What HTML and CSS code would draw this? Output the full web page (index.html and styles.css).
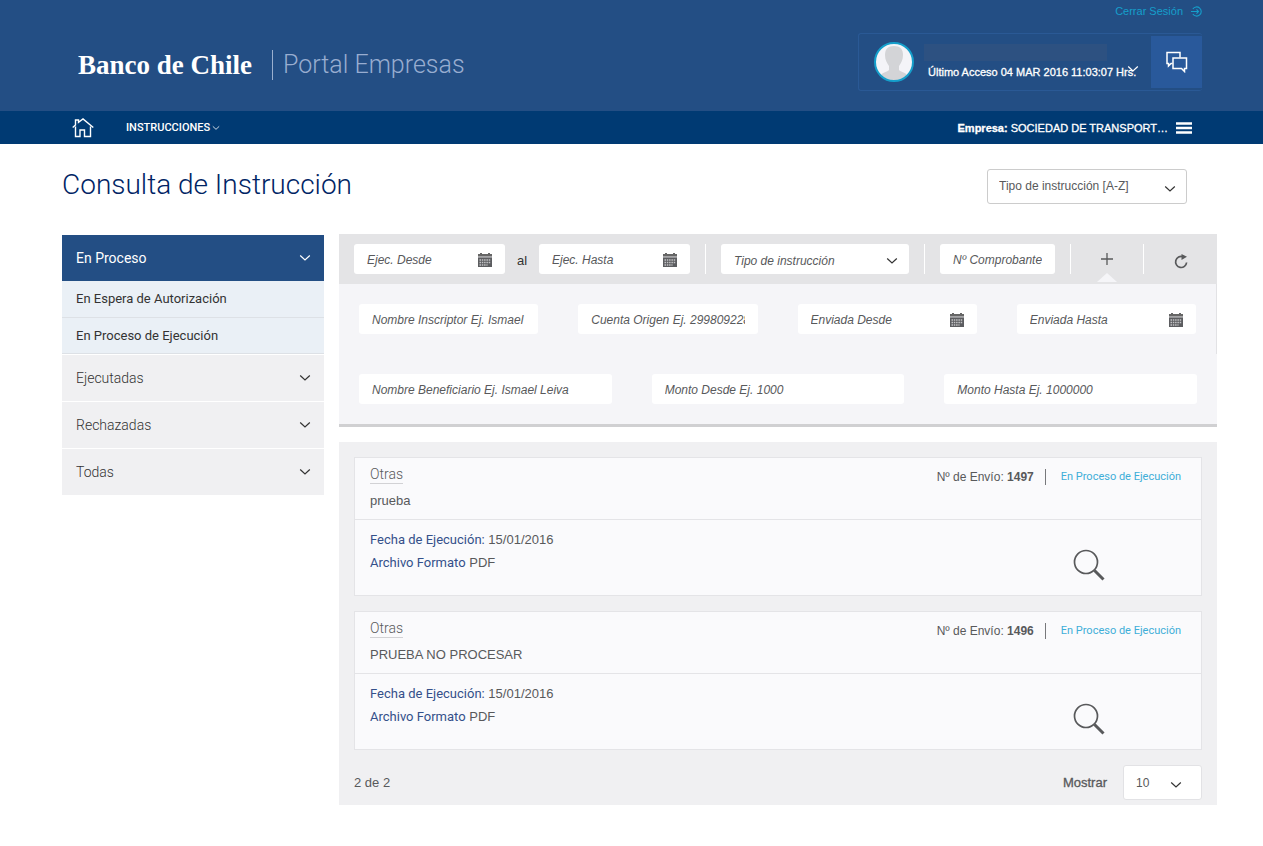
FILE: index.html
```html
<!DOCTYPE html>
<html lang="es">
<head>
<meta charset="utf-8">
<title>Consulta de Instrucción - Portal Empresas</title>
<link rel="stylesheet" href="styles.css">
</head>
<body>
<svg class="defs" aria-hidden="true">
  <symbol id="chevron" viewBox="0 0 12 12"><path d="M1.200 3.500 6 8l4.800-4.500" fill="none" stroke="currentColor" stroke-width="1.200"/></symbol>
  <symbol id="calendar" viewBox="0 0 14 15">
    <path d="M0 2h2V1h2v1h6V1h2v1h2v2H0z" fill="#666"/>
    <path d="M0 4h14v1.500H0z" fill="#a5a5a7"/>
    <path d="M0 5.500h14V15H0z" fill="#5c5d60"/>
    <path d="M1.500 8h11M1.500 10.500h11M1.500 13h8" stroke="#c4c4c6" stroke-width="1.500" stroke-dasharray="1.500 .8"/>
  </symbol>
  <symbol id="search" viewBox="0 0 32 32">
    <circle cx="13" cy="13" r="11.500" fill="none" stroke="currentColor" stroke-width="1.700"/>
    <path d="M21.500 21.500 30.500 30.500" stroke="currentColor" stroke-width="3"/>
  </symbol>
</svg>

<header class="header">
  <div class="brand">
    <span class="brand-name">Banco de Chile</span>
    <span class="brand-portal">Portal Empresas</span>
  </div>
  <div class="account">
    <a class="logout" href="#">Cerrar Sesión
      <svg viewBox="0 0 12 12" width="11" height="11"><path d="M2 3.200a5 5 0 1 1 0 5.600M0 6h8M6 3.800 8.200 6 6 8.200" fill="none" stroke="currentColor" stroke-width="1.200"/></svg>
    </a>
    <div class="user">
      <svg class="avatar" viewBox="0 0 40 40" width="40" height="40">
        <circle cx="20" cy="20" r="19" fill="#f4f4f8"/>
        <path d="M20 4c-6 0-9 3-9 9 0 5 2 8 4 11v4c-2 2-6 2-8 5 7 7 19 7 26 0-2-3-6-3-8-5v-4c2-3 4-6 4-11 0-6-3-9-9-9z" fill="#d3d4d7"/>
        <circle cx="20" cy="20" r="19" fill="none" stroke="#159fcb" stroke-width="2"/>
      </svg>
      <div class="user-info">
        <span class="user-name"></span>
        <span class="user-access">Último Acceso 04 MAR 2016 11:03:07 Hrs.</span>
        <svg class="user-chevron" width="12" height="12"><use href="#chevron"/></svg>
      </div>
      <button class="chat" type="button" aria-label="Mensajes">
        <svg viewBox="0 0 22 22" width="22" height="22" fill="none" stroke="#fff" stroke-width="1.500"><path d="M6.500 12.500H5L2.500 15v-2.500H1V1.500h13v5"/><path d="M7 7h13.500v10.500H18.500V20.500L15.500 17.500H7z"/></svg>
      </button>
    </div>
  </div>
</header>

<nav class="nav">
  <a class="home" href="#" aria-label="Inicio">
    <svg viewBox="0 0 22 20" width="22" height="20" fill="none" stroke="#fff" stroke-width="1.400"><path d="M.7 9.500 3.500 7V2h3v2.300L11 1l10.300 8.500"/><path d="M3.500 8.500v10H8v-6.500h4.500v6.500h6v-10"/></svg>
  </a>
  <a class="nav-link" href="#">INSTRUCCIONES<svg width="8" height="8"><use href="#chevron"/></svg></a>
  <button class="company" type="button"><span><b>Empresa:</b> SOCIEDAD DE TRANSPORT…</span><svg viewBox="0 0 16 12" width="16" height="12"><path d="M0 1.500h16M0 6h16M0 10.500h16" stroke="#fff" stroke-width="2.400"/></svg></button>
</nav>

<div class="page">
  <div class="page-head">
    <h1>Consulta de Instrucción</h1>
    <div class="select order">
      <select aria-label="Ordenar por"><option>Tipo de instrucción [A-Z]</option></select>
      <svg width="12" height="12"><use href="#chevron"/></svg>
    </div>
  </div>

  <div class="columns">
    <aside class="sidebar">
      <button class="side-item active" type="button">En Proceso<svg width="12" height="12"><use href="#chevron"/></svg></button>
      <a class="side-sub" href="#">En Espera de Autorización</a>
      <a class="side-sub" href="#">En Proceso de Ejecución</a>
      <button class="side-item" type="button">Ejecutadas<svg width="12" height="12"><use href="#chevron"/></svg></button>
      <button class="side-item" type="button">Rechazadas<svg width="12" height="12"><use href="#chevron"/></svg></button>
      <button class="side-item" type="button">Todas<svg width="12" height="12"><use href="#chevron"/></svg></button>
    </aside>

    <main class="main">
      <form class="filters">
        <div class="filter-bar">
          <div class="field date"><input type="text" placeholder="Ejec. Desde" aria-label="Ejec. Desde"><svg width="14" height="15"><use href="#calendar"/></svg></div>
          <span class="to">al</span>
          <div class="field date"><input type="text" placeholder="Ejec. Hasta" aria-label="Ejec. Hasta"><svg width="14" height="15"><use href="#calendar"/></svg></div>
          <span class="sep"></span>
          <div class="select type">
            <select aria-label="Tipo de instrucción"><option>Tipo de instrucción</option></select>
            <svg width="12" height="12"><use href="#chevron"/></svg>
          </div>
          <span class="sep"></span>
          <div class="field voucher"><input type="text" placeholder="Nº Comprobante" aria-label="Nº Comprobante"></div>
          <span class="sep"></span>
          <button class="more" type="button" aria-label="Más filtros"><svg viewBox="0 0 12 12" width="12" height="12"><path d="M6 0v12M0 6h12" stroke="currentColor" stroke-width="1.300"/></svg></button>
          <span class="sep"></span>
          <button class="reload" type="button" aria-label="Limpiar"><svg viewBox="0 0 14 16" width="14" height="16"><path d="M9 3.800A5.500 5.500 0 1 0 12.600 9.500" fill="none" stroke="currentColor" stroke-width="1.700"/><path d="M7.500 1 13 3.800 7.500 7z" fill="currentColor"/></svg></button>
        </div>
        <div class="filter-row four">
          <div class="field"><input type="text" placeholder="Nombre Inscriptor Ej. Ismael Leiva" aria-label="Nombre Inscriptor"></div>
          <div class="field"><input type="text" placeholder="Cuenta Origen Ej. 2998092285" aria-label="Cuenta Origen"></div>
          <div class="field"><input type="text" placeholder="Enviada Desde" aria-label="Enviada Desde"><svg width="14" height="15"><use href="#calendar"/></svg></div>
          <div class="field"><input type="text" placeholder="Enviada Hasta" aria-label="Enviada Hasta"><svg width="14" height="15"><use href="#calendar"/></svg></div>
        </div>
        <div class="filter-row three">
          <div class="field"><input type="text" placeholder="Nombre Beneficiario Ej. Ismael Leiva" aria-label="Nombre Beneficiario"></div>
          <div class="field"><input type="text" placeholder="Monto Desde Ej. 1000" aria-label="Monto Desde"></div>
          <div class="field"><input type="text" placeholder="Monto Hasta Ej. 1000000" aria-label="Monto Hasta"></div>
        </div>
      </form>

      <section class="results">
        <article class="card">
          <div class="card-head">
            <div><h2>Otras</h2><p>prueba</p></div>
            <div class="status"><span class="number">Nº de Envío: <b>1497</b></span><span class="state">En Proceso de Ejecución</span></div>
          </div>
          <div class="card-body">
            <div><p><span class="label">Fecha de Ejecución:</span> 15/01/2016</p><p><span class="label">Archivo Formato</span> PDF</p></div>
            <button class="detail" type="button" aria-label="Ver detalle"><svg width="32" height="32"><use href="#search"/></svg></button>
          </div>
        </article>
        <article class="card">
          <div class="card-head">
            <div><h2>Otras</h2><p>PRUEBA NO PROCESAR</p></div>
            <div class="status"><span class="number">Nº de Envío: <b>1496</b></span><span class="state">En Proceso de Ejecución</span></div>
          </div>
          <div class="card-body">
            <div><p><span class="label">Fecha de Ejecución:</span> 15/01/2016</p><p><span class="label">Archivo Formato</span> PDF</p></div>
            <button class="detail" type="button" aria-label="Ver detalle"><svg width="32" height="32"><use href="#search"/></svg></button>
          </div>
        </article>
        <footer class="pager">
          <span>2 de 2</span>
          <label for="size">Mostrar</label>
          <div class="select size">
            <select id="size"><option>10</option></select>
            <svg width="12" height="12"><use href="#chevron"/></svg>
          </div>
        </footer>
      </section>
    </main>
  </div>
</div>
</body>
</html>
```

FILE: styles.css
```css
* { box-sizing: border-box; }
body { margin: 0; background: #fff; color: #58595b; font: 13px/16px "Liberation Sans", Arial, sans-serif; }
h1, h2, p { margin: 0; }
a { text-decoration: none; color: inherit; }
button { border: 0; padding: 0; background: none; font: inherit; color: inherit; cursor: pointer; }
svg { flex: none; }
.defs { position: absolute; width: 0; height: 0; }

.header { display: flex; justify-content: space-between; background: #234e84; padding: 0 61px 20px 78px; color: #fff; }
.brand { display: flex; align-items: center; padding-top: 38px; }
.brand-name { font: bold 27px/32px "Liberation Serif", serif; padding-right: 20px; }
.brand-portal { font: 300 25px/30px Roboto, sans-serif; color: #98add0; border-left: 1px solid #9bb0cf; padding-left: 10px; }
.account { display: flex; flex-direction: column; align-items: flex-end; gap: 10px; }
.logout { display: flex; align-items: center; gap: 8px; padding-top: 3px; height: 23px; padding-bottom: 4px; color: #159fcb; font-size: 11px; }
.user { display: flex; align-items: center; width: 344px; height: 58px; border: 1px solid #2a5995; border-right: 0; border-radius: 3px; padding-left: 15px; }
.user-info { position: relative; flex: 1; display: flex; flex-direction: column; padding-left: 10px; gap: 3px; font-size: 11px; }
.user-name { width: 183px; height: 17px; background: #2d5181; }
.user-access { padding-left: 4px; white-space: nowrap; -webkit-text-stroke: 0.3px #fff; }
.user-chevron { position: absolute; right: 12px; bottom: 5px; }
.chat { display: flex; align-items: center; justify-content: center; width: 51px; height: 52px; background: #29599b; }

.nav { display: flex; align-items: center; background: #003a73; height: 33px; padding: 0 71px 0 72px; color: #fff; font-size: 11px; }
.home { display: flex; margin-right: 32px; }
.nav-link { display: flex; align-items: center; gap: 2px; font-family: Roboto, sans-serif; font-weight: 500; }
.nav-link svg { stroke-width: 2; }
.company { display: flex; align-items: center; gap: 8px; margin-left: auto; -webkit-text-stroke: 0.3px #fff; }

.page { padding: 25px 46px 42px 62px; }
.page-head { display: flex; justify-content: space-between; padding-right: 30px; margin-bottom: 30px; }
h1 { font: 300 28px/32px Roboto, sans-serif; color: #002464; }
.columns { display: flex; align-items: flex-start; gap: 15px; }
.main { flex: 1; min-width: 0; }

.select { position: relative; }
.select select { appearance: none; display: block; width: 100%; height: 100%; border: 0; border-radius: 3px; background: #fff; color: #58595b; font: inherit; padding: 0 28px 0 12px; }
.select svg { position: absolute; right: 11px; top: 50%; margin-top: -4px; color: #333; pointer-events: none; }
.order { width: 200px; height: 35px; font-size: 12px; }
.order select { border: 1px solid #ccc; padding: 0 28px 2px 11px; }

.sidebar { width: 262px; display: flex; flex-direction: column; margin-top: 1px; font: 14px/16px Roboto, sans-serif; color: #333; }
.side-item { display: flex; align-items: center; justify-content: space-between; height: 47px; padding: 0 13px 0 14px; background: #f0f0f2; border-top: 1px solid #fff; font-weight: 300; }
.side-item.active { height: 46px; background: #234e84; border-top: 0; color: #fff; font-weight: 400; }
.side-sub { height: 37px; line-height: 36px; padding-left: 14px; background: #eaf0f6; border-bottom: 1px solid #dde1e6; font-size: 13px; }
.side-sub + .side-sub { height: 36px; }

.filters { background: #f5f5f8; border-bottom: 3px solid #d0d0d2; }
.filter-bar { display: flex; align-items: center; height: 50px; background: #e4e4e6; padding-left: 15px; }
.field { display: flex; align-items: center; height: 30px; min-width: 0; background: #fff; border-radius: 3px; padding: 1px 13px 0; }
.field input { flex: 1; min-width: 0; width: 0; border: 0; outline: 0; padding: 0; background: none; font: italic 12px/16px "Liberation Sans", Arial, sans-serif; }
.field input::placeholder { color: #58595b; opacity: 1; }
.date { width: 151px; }
.to { width: 34px; padding-top: 4px; text-align: center; color: #333; }
.sep { width: 1px; height: 30px; background: #fff; margin: 0 15px; }
.type { flex: 1; height: 30px; font: italic 12px/16px "Liberation Sans", Arial, sans-serif; }
.type select { padding: 3px 28px 0 13px; }
.voucher { width: 115px; }
.voucher + .sep { margin-right: 0; }
.more { position: relative; display: flex; align-items: center; justify-content: center; width: 72px; height: 50px; }
.more::after { content: ""; position: absolute; left: 26px; bottom: 2px; border: 10px solid transparent; border-top: 0; border-bottom: 9px solid #f5f5f8; }
.more + .sep { margin: 0; }
.reload { display: flex; align-items: center; justify-content: center; width: 73px; height: 50px; padding-top: 3px; }
.filter-row { display: grid; gap: 40px; padding: 20px; }
.four { grid-template-columns: repeat(4, 1fr); border-right: 1px solid #e2e2e5; }
.three { grid-template-columns: repeat(3, 1fr); }

.results { margin-top: 15px; padding: 15px 15px 5px; background: #f0f0f2; }
.card { background: #fafafc; border: 1px solid #e4e4e7; margin-bottom: 15px; }
.card-head { display: flex; justify-content: space-between; padding: 7px 20px 10px 15px; border-bottom: 1px solid #e4e4e7; }
h2 { width: fit-content; font: 300 14px/18px Roboto, sans-serif; border-bottom: 1px solid #d2d2d5; margin-bottom: 9px; }
.status { display: flex; align-items: center; height: 24px; font-size: 12px; }
.number { border-right: 1px solid #77787b; padding-right: 11px; margin-right: 15px; }
.state { font: 11px/16px Roboto, sans-serif; color: #3eaed8; }
.card-body { display: flex; justify-content: space-between; padding: 8px 96px 14px 15px; }
.card-body p { line-height: 23px; }
.label { font-family: Roboto, sans-serif; color: #34508a; }
.detail { display: flex; margin-top: 21px; }
.pager { display: flex; align-items: center; height: 35px; }
.pager label { margin: 0 16px 0 auto; -webkit-text-stroke: 0.3px #58595b; }
.size { width: 79px; height: 35px; font-size: 12px; }
.size select { border: 1px solid #e2e2e5; }
.size svg { right: 20px; }
```
